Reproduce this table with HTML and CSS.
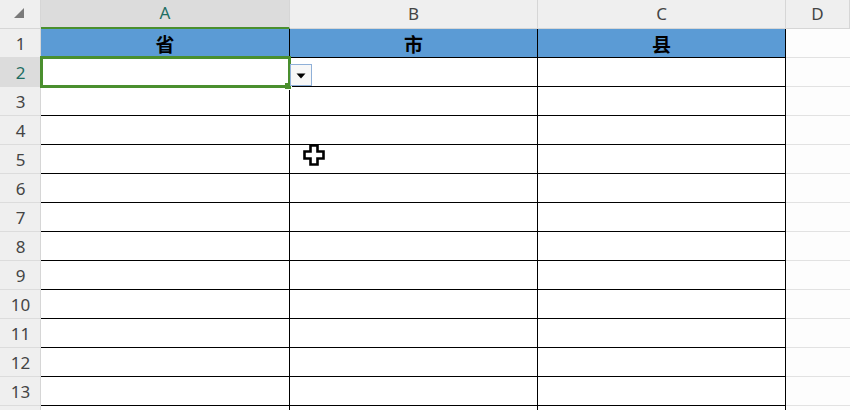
FILE: index.html
```html
<!DOCTYPE html>
<html>
<head>
<meta charset="utf-8">
<link rel="stylesheet" href="styles.css">
</head>
<body>
<div class="sheet">
  <div class="grid">
    <div class="corner"><svg width="12" height="12" viewBox="0 0 12 12"><polygon points="11,1 11,11 1,11" fill="#7a7a7a"/></svg></div>
    <div class="colhead sel">A</div>
    <div class="colhead">B</div>
    <div class="colhead">C</div>
    <div class="colhead">D</div>

    <div class="rowhead">1</div>
    <div class="cell title">省</div>
    <div class="cell title">市</div>
    <div class="cell title">县</div>
    <div class="cell empty"></div>

    <div class="rowhead sel">2</div><div class="cell"></div><div class="cell"></div><div class="cell"></div><div class="cell empty"></div>
    <div class="rowhead">3</div><div class="cell"></div><div class="cell"></div><div class="cell"></div><div class="cell empty"></div>
    <div class="rowhead">4</div><div class="cell"></div><div class="cell"></div><div class="cell"></div><div class="cell empty"></div>
    <div class="rowhead">5</div><div class="cell"></div><div class="cell"></div><div class="cell"></div><div class="cell empty"></div>
    <div class="rowhead">6</div><div class="cell"></div><div class="cell"></div><div class="cell"></div><div class="cell empty"></div>
    <div class="rowhead">7</div><div class="cell"></div><div class="cell"></div><div class="cell"></div><div class="cell empty"></div>
    <div class="rowhead">8</div><div class="cell"></div><div class="cell"></div><div class="cell"></div><div class="cell empty"></div>
    <div class="rowhead">9</div><div class="cell"></div><div class="cell"></div><div class="cell"></div><div class="cell empty"></div>
    <div class="rowhead">10</div><div class="cell"></div><div class="cell"></div><div class="cell"></div><div class="cell empty"></div>
    <div class="rowhead">11</div><div class="cell"></div><div class="cell"></div><div class="cell"></div><div class="cell empty"></div>
    <div class="rowhead">12</div><div class="cell"></div><div class="cell"></div><div class="cell"></div><div class="cell empty"></div>
    <div class="rowhead">13</div><div class="cell"></div><div class="cell"></div><div class="cell"></div><div class="cell empty"></div>
    <div class="rowhead"></div><div class="cell nob"></div><div class="cell nob"></div><div class="cell nob"></div><div class="cell empty"></div>
  </div>

  <div class="selection"><span class="handle"></span></div>
  <div class="dropdown"><svg width="10" height="6" viewBox="0 0 10 6"><polygon points="0.5,0.5 9.5,0.5 5,5.5" fill="#000"/></svg></div>
  <svg class="cursor" width="24" height="24" viewBox="0 0 24 24">
    <path d="M8.5 2.5h7v6h6v7h-6v6h-7v-6h-6v-7h6z" fill="#fff" stroke="#000" stroke-width="2.6" stroke-linejoin="miter"/>
  </svg>
</div>
</body>
</html>
```

FILE: styles.css
```css
html, body {
  margin: 0;
  padding: 0;
  background: #ffffff;
  overflow: hidden;
}

.sheet {
  position: relative;
  width: 850px;
  height: 410px;
  overflow: hidden;
  font-family: "Noto Sans", "Open Sans", sans-serif;
}

.grid {
  display: grid;
  grid-template-columns: 41px 249px 248px 248px 1fr;
  grid-auto-rows: 29px;
}

.grid > div {
  box-sizing: border-box;
}

.corner {
  background: #efefef;
  border-right: 1px solid #d6d6d6;
  border-bottom: 1px solid #d6d6d6;
  display: flex;
  align-items: flex-start;
  justify-content: flex-start;
  padding: 7px 0 0 13px;
}

.colhead {
  background: #efefef;
  border-right: 1px solid #d6d6d6;
  border-bottom: 1px solid #d6d6d6;
  color: #444;
  font-size: 17px;
  display: flex;
  align-items: center;
  justify-content: center;
  padding-bottom: 2px;
}

.colhead.sel {
  background: #dcdcdc;
  color: #1f6e63;
  border-bottom: 2px solid #4a8f2e;
}

.rowhead {
  background: #efefef;
  border-right: 1px solid #d6d6d6;
  border-bottom: 1px solid #dcdcdc;
  color: #444;
  font-size: 17px;
  display: flex;
  align-items: center;
  justify-content: center;
  padding-left: 1px;
}

.rowhead.sel {
  background: #dcdcdc;
  color: #1f6e63;
}

.cell {
  background: #fff;
  border-right: 1px solid #000;
  border-bottom: 1px solid #000;
}

.cell.nob {
  border-bottom: none;
}

.cell.title {
  background: #5b9bd5;
  color: #000;
  font-family: "Noto Sans CJK SC", sans-serif;
  font-weight: 700;
  font-size: 19px;
  display: flex;
  align-items: center;
  justify-content: center;
  padding-top: 1px;
}

.cell.empty {
  background: #fdfdfd;
  border-right: none;
  border-bottom: 1px solid #e2e2e2;
}

.selection {
  position: absolute;
  left: 40px;
  top: 56px;
  width: 251px;
  height: 32px;
  box-sizing: border-box;
  border: 3px solid #4a8f2e;
}

.handle {
  position: absolute;
  right: -4px;
  bottom: -5px;
  width: 6px;
  height: 6px;
  background: #4a8f2e;
  border-right: 1px solid #fff;
  border-bottom: 1px solid #fff;
}

.dropdown {
  position: absolute;
  left: 290px;
  top: 64px;
  width: 22px;
  height: 22px;
  box-sizing: border-box;
  border: 1px solid #8fb0d8;
  background: #f7f7f7;
  display: flex;
  align-items: center;
  justify-content: center;
  padding-top: 1px;
}

.cursor {
  position: absolute;
  left: 302px;
  top: 143px;
}
```
